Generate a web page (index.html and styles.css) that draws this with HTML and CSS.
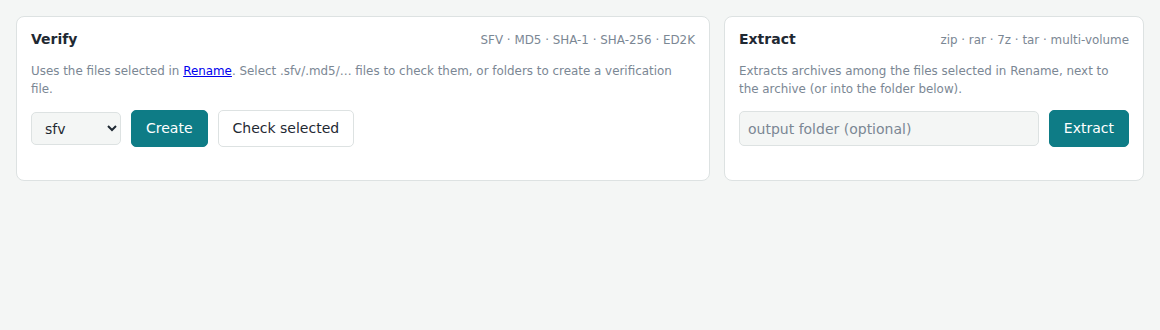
FILE: index.html
```html
<!DOCTYPE html>
<html>
<head>
<meta charset="utf-8">
<link rel="stylesheet" href="styles.css">
</head>
<body>
<div class="grid">
  <section class="card">
    <div class="head">
      <h2 class="title">Verify</h2>
      <span class="meta">SFV · MD5 · SHA-1 · SHA-256 · ED2K</span>
    </div>
    <p class="desc">Uses the files selected in <a href="#">Rename</a>. Select .sfv/.md5/… files to check them, or folders to create a verification file.</p>
    <div class="row">
      <select class="select"><option>sfv</option><option>md5</option></select>
      <button class="btn primary">Create</button>
      <button class="btn">Check selected</button>
    </div>
  </section>
  <section class="card">
    <div class="head">
      <h2 class="title">Extract</h2>
      <span class="meta">zip · rar · 7z · tar · multi-volume</span>
    </div>
    <p class="desc">Extracts archives among the files selected in Rename, next to the archive (or into the folder below).</p>
    <div class="row">
      <input class="input" type="text" placeholder="output folder (optional)">
      <button class="btn primary">Extract</button>
    </div>
  </section>
</div>
</body>
</html>
```
FILE: styles.css
```css
html, body {
  margin: 0;
  background: #f4f6f5;
  font-family: "DejaVu Sans", sans-serif;
  color: #1f2933;
}
body {
  padding: 16px;
}
.grid {
  display: grid;
  grid-template-columns: 1fr 420px;
  gap: 14px;
  align-items: start;
}
.card {
  background: #fff;
  border: 1px solid #dde2e2;
  border-radius: 8px;
  padding: 14px 14px 33px;
}
.head {
  display: flex;
  justify-content: space-between;
  align-items: baseline;
}
.title {
  margin: 0;
  font-size: 14px;
  font-weight: bold;
  line-height: 17px;
  color: #1f2933;
}
.meta {
  font-size: 11.9px;
  color: #7b8794;
}
.desc {
  margin: 14px 0 12px;
  font-size: 11.9px;
  line-height: 18px;
  color: #7b8794;
}
.desc a {
  color: #0000ee;
  text-decoration: underline;
}
.row {
  display: flex;
  gap: 10px;
  align-items: center;
}
.select {
  width: 90px;
  height: 33px;
  font-family: "DejaVu Sans", sans-serif;
  font-size: 14px;
  color: #1f2933;
  background: #f4f6f5;
  border: 1px solid #dde2e2;
  border-radius: 5px;
  padding: 0 6px 0 9px;
}
.btn {
  font-family: "DejaVu Sans", sans-serif;
  font-size: 14px;
  line-height: 17px;
  padding: 9px 14px;
  border: 1px solid #dde2e2;
  border-radius: 5px;
  background: #fff;
  color: #1f2933;
}
.btn.primary {
  background: #0e7c86;
  border-color: #0e7c86;
  color: #fff;
}
.input {
  flex: 1;
  height: 35px;
  box-sizing: border-box;
  font-family: "DejaVu Sans", sans-serif;
  font-size: 14px;
  color: #1f2933;
  background: #f4f6f5;
  border: 1px solid #dde2e2;
  border-radius: 5px;
  padding: 0 8px;
}
.input::placeholder {
  color: #7b8794;
}
```
